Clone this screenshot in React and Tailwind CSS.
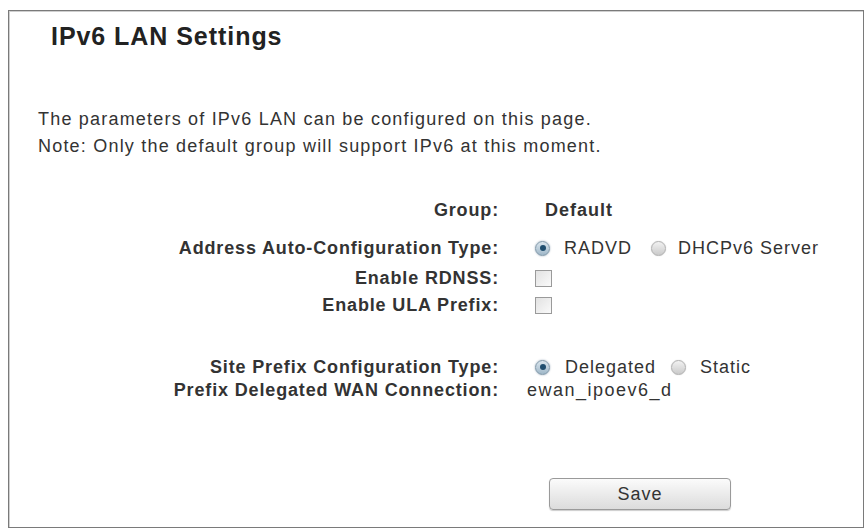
const Radio = ({ checked }) =>
  checked ? (
    <span className="flex shrink-0 items-center justify-center w-[15px] h-[15px] rounded-full border border-[#7f97a8] bg-gradient-to-b from-[#dbe6ee] to-[#9fb7c8] shadow-[0_0_2px_#9ab]">
      <span className="w-[6px] h-[6px] rounded-full bg-[#1f4d6e]" />
    </span>
  ) : (
    <span className="block shrink-0 w-[15px] h-[15px] rounded-full border border-[#b0b0b0] bg-gradient-to-b from-[#f2f2f2] to-[#cacaca] shadow-[0_0_1px_#bbb]" />
  );

const Checkbox = () => (
  <span className="block w-[17px] h-[17px] border border-[#9a9a9a] bg-gradient-to-br from-[#e2e2e2] to-[#fafafa]" />
);

const Row = ({ label, className = "", children }) => (
  <div className={`flex items-center h-[22px] ${className}`}>
    <div className="w-[490px] text-right font-bold tracking-[0.85px] text-[#333]">{label}</div>
    <div className="ml-[28px] flex items-center">{children}</div>
  </div>
);

export default function App() {
  return (
    <div
      className="pt-[10px] pl-[8px] bg-white min-h-[531px] text-[18px] text-[#333]"
      style={{ fontFamily: '"Liberation Sans", Arial, sans-serif' }}
    >
      <div className="w-[856px] h-[518px] border border-[#7a7a7a] shadow-[inset_1px_1px_0_#cfcfcf]">
        {/* Title */}
        <h1 className="pt-[11px] pl-[42px] text-[25px] leading-[29px] font-bold tracking-[0.95px] text-[#222]">
          IPv6 LAN Settings
        </h1>

        {/* Description */}
        <div className="mt-[55px] pl-[29px] leading-[27px] tracking-[1.2px]">
          <p>The parameters of IPv6 LAN can be configured on this page.</p>
          <p>Note: Only the default group will support IPv6 at this moment.</p>
        </div>

        {/* Form */}
        <div className="mt-[39px]">
          <Row label="Group:">
            <span className="ml-[18px] font-bold tracking-[1px]">Default</span>
          </Row>
          <Row label="Address Auto-Configuration Type:" className="mt-[16px]">
            <span className="ml-[8px] flex items-center tracking-[1px]">
              <Radio checked />
              <span className="ml-[14px]">RADVD</span>
              <span className="ml-[19px]">
                <Radio />
              </span>
              <span className="ml-[12px]">DHCPv6 Server</span>
            </span>
          </Row>
          <Row label="Enable RDNSS:" className="mt-[8px]">
            <span className="ml-[8px]">
              <Checkbox />
            </span>
          </Row>
          <Row label="Enable ULA Prefix:" className="mt-[5px]">
            <span className="ml-[8px]">
              <Checkbox />
            </span>
          </Row>
          <Row label="Site Prefix Configuration Type:" className="mt-[40px]">
            <span className="ml-[8px] flex items-center tracking-[1px]">
              <Radio checked />
              <span className="ml-[15px]">Delegated</span>
              <span className="ml-[15px]">
                <Radio />
              </span>
              <span className="ml-[14px]">Static</span>
            </span>
          </Row>
          <Row label="Prefix Delegated WAN Connection:" className="mt-[1px]">
            <span className="tracking-[1.5px]">ewan_ipoev6_d</span>
          </Row>
        </div>

        {/* Save */}
        <div className="mt-[77px] pl-[540px]">
          <button className="w-[182px] h-[32px] rounded-[4px] border border-[#9a9a9a] bg-gradient-to-b from-[#fbfbfb] to-[#dcdcdc] text-[18px] text-[#333] tracking-[1px] shadow-[0_1px_1px_#ccc]">
            Save
          </button>
        </div>
      </div>
    </div>
  );
}
